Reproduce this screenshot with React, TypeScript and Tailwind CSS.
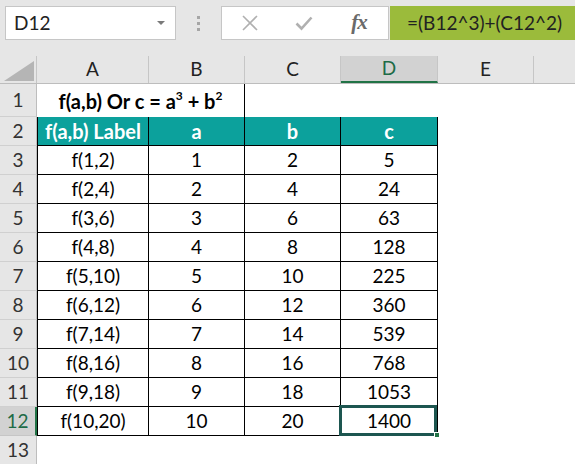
import React from 'react';

const rows = [
  ['f(1,2)', '1', '2', '5'],
  ['f(2,4)', '2', '4', '24'],
  ['f(3,6)', '3', '6', '63'],
  ['f(4,8)', '4', '8', '128'],
  ['f(5,10)', '5', '10', '225'],
  ['f(6,12)', '6', '12', '360'],
  ['f(7,14)', '7', '14', '539'],
  ['f(8,16)', '8', '16', '768'],
  ['f(9,18)', '9', '18', '1053'],
  ['f(10,20)', '10', '20', '1400'],
];

const cols = [
  { l: 'A', w: 'w-[112px]' },
  { l: 'B', w: 'w-[96px]' },
  { l: 'C', w: 'w-[96px]' },
  { l: 'D', w: 'w-[97px]' },
  { l: 'E', w: 'w-[96px]' },
];

function RowHead({ n, h, active }: { n: number; h: string; active?: boolean }) {
  return (
    <div
      className={`${h} w-[37px] shrink-0 flex items-center justify-center border-b text-[19px] ${
        active
          ? 'bg-[#d2d2d2] border-r-2 border-r-[#217346] border-b-[#c6c6c6] text-[#1e6b47]'
          : 'bg-[#e6e6e6] border-r border-r-[#bdbdbd] border-b-[#d0d0d0] text-[#333]'
      }`}
    >
      {n}
    </div>
  );
}

export default function App() {
  return (
    <div className="w-[575px] h-[464px] overflow-hidden bg-white font-['Lato',sans-serif] text-black">
      {/* Name box + formula bar */}
      <div className="h-[56px] bg-[#e6e6e6] flex items-start pt-[6px]">
        <div className="ml-[5px] w-[171px] shrink-0 h-[34px] bg-white border border-[#c6c6c6] flex items-center justify-between pl-[8px] pr-[10px]">
          <span className="text-[19px] text-[#222]">D12</span>
          <span className="w-0 h-0 border-l-[4px] border-r-[4px] border-t-[4px] border-l-transparent border-r-transparent border-t-[#7a7a7a]" />
        </div>
        <div className="w-[45px] shrink-0 h-[34px] flex flex-col items-center justify-center gap-[3px]">
          <span className="w-[3px] h-[3px] bg-[#a6a6a6]" />
          <span className="w-[3px] h-[3px] bg-[#a6a6a6]" />
          <span className="w-[3px] h-[3px] bg-[#a6a6a6]" />
        </div>
        <div className="w-[168px] shrink-0 h-[34px] bg-white border border-[#c6c6c6] flex items-center">
          <div className="w-[56px] flex justify-center">
            <svg width="18" height="18" viewBox="0 0 18 18">
              <path d="M2 2 L16 16 M16 2 L2 16" stroke="#b0b0b0" strokeWidth="1.6" fill="none" />
            </svg>
          </div>
          <div className="w-[52px] flex justify-center">
            <svg width="18" height="16" viewBox="0 0 18 16">
              <path d="M1.5 8.5 L6.5 13.5 L16.5 2.5" stroke="#b0b0b0" strokeWidth="2.6" fill="none" />
            </svg>
          </div>
          <div className="flex-1 flex justify-center">
            <span className="font-['Liberation_Serif',serif] italic font-bold text-[21px] text-[#6a6a6a] tracking-[-1px]">fx</span>
          </div>
        </div>
        <div className="flex-1 min-w-0 ml-[1px] h-[34px] bg-[#9bbb3b] flex items-center pl-[17px] text-[19px] text-[#222] whitespace-nowrap overflow-hidden">
          =(B12^3)+(C12^2)
        </div>
      </div>

      {/* Column headers */}
      <div className="flex h-[28px] bg-[#e6e6e6] border-b border-[#bdbdbd]">
        <div className="w-[37px] shrink-0 relative border-r border-[#c6c6c6]">
          <svg className="absolute left-[4px] top-[5px]" width="30" height="20" viewBox="0 0 30 20">
            <path d="M30 0 L30 20 L0 20 Z" fill="#b5b5b5" />
          </svg>
        </div>
        {cols.map((c) => (
          <div
            key={c.l}
            className={`${c.w} shrink-0 flex items-center justify-center text-[19px] border-r border-[#c6c6c6] ${
              c.l === 'D' ? 'bg-[#d2d2d2] border-b-2 border-b-[#217346] text-[#1e6b47]' : 'text-[#222]'
            }`}
          >
            {c.l}
          </div>
        ))}
        <div className="flex-1" />
      </div>

      {/* Row 1 */}
      <div className="flex">
        <RowHead n={1} h="h-[33px]" />
        <div className="w-[208px] h-[33px] border-r border-black flex items-center justify-center font-bold text-[20px]">
          <span>
            f(a,b) Or c = a<sup className="text-[12px] -top-[9px]">3</sup> + b
            <sup className="text-[12px] -top-[9px]">2</sup>
          </span>
        </div>
      </div>

      {/* Row 2 header */}
      <div className="flex">
        <RowHead n={2} h="h-[29px]" />
        {['f(a,b) Label', 'a', 'b', 'c'].map((t, i) => (
          <div
            key={t}
            className={`${cols[i].w} h-[29px] shrink-0 bg-[#0ca19c] text-white font-bold text-[20px] flex items-center justify-center border-r border-b border-black ${
              i === 0 ? 'border-l' : ''
            }`}
          >
            {t}
          </div>
        ))}
      </div>

      {/* Data rows */}
      {rows.map((r, ri) => (
        <div key={ri} className="flex">
          <RowHead n={ri + 3} h="h-[29px]" active={ri === rows.length - 1} />
          {r.map((t, i) => (
            <div
              key={i}
              className={`${cols[i].w} h-[29px] shrink-0 relative text-[19px] flex items-center justify-center border-r border-b border-black ${
                i === 0 ? 'border-l' : ''
              }`}
            >
              {t}
              {ri === rows.length - 1 && i === 3 && (
                <>
                  <div className="absolute -left-[2px] -top-[2px] w-[98px] h-[31px] border-[3px] border-[#1d5650]" />
                  <div className="absolute -right-[3px] -bottom-[3px] w-[6px] h-[6px] bg-[#217346] border border-white" />
                </>
              )}
            </div>
          ))}
        </div>
      ))}

      {/* Row 13 */}
      <div className="flex">
        <RowHead n={13} h="h-[29px]" />
      </div>
    </div>
  );
}
